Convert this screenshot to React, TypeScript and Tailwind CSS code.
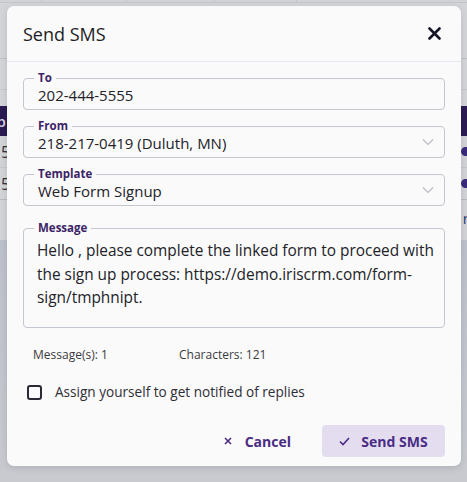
import React from "react";

const font = { fontFamily: '"Open Sans", "Noto Sans", sans-serif' };

function Chevron() {
  return (
    <svg width="12" height="8" viewBox="0 0 12 8" className="shrink-0">
      <path d="M1 1.5 L6 6.5 L11 1.5" fill="none" stroke="#b9bcc4" strokeWidth="1.2" />
    </svg>
  );
}

function Field({ label, children, select }: { label: string; children: React.ReactNode; select?: boolean }) {
  return (
    <div className="relative h-[32px] rounded-[4px] border border-[#c3c7cf] flex items-center pl-[14px] pr-[10px]">
      <span className="absolute -top-[9px] left-[10px] bg-[#fafafa] px-[4px] text-[11.5px] font-bold text-[#3b2466] leading-[16px]">
        {label}
      </span>
      <div className="flex-1 text-[15px] text-[#222228] leading-[20px] pt-[1px]">{children}</div>
      {select && <Chevron />}
    </div>
  );
}

export default function App() {
  return (
    <div className="relative w-[467px] h-[482px] overflow-hidden bg-[#d1d2d6]" style={font}>
      {/* Background page (dimmed) */}
      <div className="flex flex-col w-full text-[#303038]">
        <div className="h-[3px] flex border-b border-[#c4c5c9]">
          <div className="w-[42px] border-r border-[#c4c5c9]" />
          <div className="w-[85px] border-r border-[#c4c5c9]" />
          <div className="w-[88px] border-r border-[#c4c5c9]" />
          <div className="w-[82px] border-r border-[#c4c5c9]" />
        </div>
        <div className="h-[56px] bg-[#d3d4d8] border-b border-[#bfc0c4]" />
        <div className="h-[31px] bg-[#d3d4d8] border-b border-[#c6c7cb]" />
        <div className="h-[16px] bg-[#d3d4d8]" />
        <div className="h-[30px] bg-[#2b1b52] flex items-center justify-between text-[#d9d6e4] text-[15px] font-semibold">
          <span className="-ml-[8px]">Ip</span>
          <span />
        </div>
        <div className="h-[32px] bg-[#d2d3d7] border-b border-[#c6c7cb] flex items-center justify-between text-[16px]">
          <span className="ml-[1px]">5</span>
          <span className="w-[10px] h-[9px] rounded-full border-2 border-[#3b2a7a] bg-[#3b2a7a] mr-[-4px]" />
        </div>
        <div className="h-[32px] bg-[#d2d3d7] border-b border-[#b9babe] flex items-center justify-between text-[16px]">
          <span className="ml-[1px]">5</span>
          <span className="w-[10px] h-[9px] rounded-full border-2 border-[#3b2a7a] bg-[#3b2a7a] mr-[-4px]" />
        </div>
        <div className="h-[40px] bg-[#d2d3d7] flex items-center justify-end text-[15px] text-[#2b3a70]">
          <span className="mr-[-2px] -mt-[4px]">r</span>
        </div>
        <div className="h-[260px] bg-gradient-to-b from-[#bcc0ca] to-[#c9cbd0]" />
      </div>

      {/* Dialog */}
      <div className="absolute left-[7px] top-[6px] w-[454px] h-[460px] bg-[#fafafa] rounded-[7px] shadow-[0_2px_6px_rgba(0,0,0,0.12)] flex flex-col">
        <div className="h-[56px] border-b border-[#e4e6f1] flex items-center justify-between pl-[16px] pr-[20px]">
          <span className="text-[18px] text-[#1d1d24] leading-[24px] mt-[1px]">Send SMS</span>
          <svg width="13" height="13" viewBox="0 0 13 13">
            <path d="M1.5 1.5 L11.5 11.5 M11.5 1.5 L1.5 11.5" stroke="#15152a" strokeWidth="2.6" strokeLinecap="round" />
          </svg>
        </div>

        <div className="flex flex-col px-[16px] pt-[16px]">
          <Field label="To">202-444-5555</Field>
          <div className="h-[16px]" />
          <Field label="From" select>
            218-217-0419 (Duluth, MN)
          </Field>
          <div className="h-[16px]" />
          <Field label="Template" select>
            Web Form Signup
          </Field>
          <div className="h-[22px]" />
          <div className="relative h-[100px] rounded-[4px] border border-[#c3c7cf] pl-[13px] pr-[8px] pt-[10px]">
            <span className="absolute -top-[9px] left-[10px] bg-[#fafafa] px-[4px] text-[11.5px] font-bold text-[#3b2466] leading-[16px]">
              Message
            </span>
            <p className="text-[15.4px] leading-[23.5px] text-[#222228]">
              Hello , please complete the linked form to proceed with the sign up process: https://demo.iriscrm.com/form-sign/tmphnipt.
            </p>
          </div>

          <div className="flex text-[12px] text-[#3a3a42] mt-[19px] pl-[10px] leading-[16px]">
            <span className="w-[146px]">Message(s): 1</span>
            <span>Characters: 121</span>
          </div>

          <div className="flex items-center mt-[19px] pl-[4px]">
            <span className="w-[15px] h-[15px] rounded-[3px] border-2 border-[#2a2a36]" />
            <span className="ml-[13px] text-[13.6px] text-[#2e2e36] leading-[20px]">Assign yourself to get notified of replies</span>
          </div>

          <div className="flex justify-end items-center mt-[23px] gap-[31px]">
            <div className="flex items-center text-[#4a2c84] text-[14px] font-bold">
              <svg width="8" height="8" viewBox="0 0 8 8">
                <path d="M1 1 L7 7 M7 1 L1 7" stroke="#4a2c84" strokeWidth="1.6" />
              </svg>
              <span className="ml-[13px]">Cancel</span>
            </div>
            <div className="h-[32px] w-[123px] rounded-[4px] bg-[#e4ddf0] flex items-center justify-center text-[#4a2c84] text-[14px] font-bold">
              <svg width="11" height="9" viewBox="0 0 11 9">
                <path d="M1 4.5 L4 7.5 L10 1" fill="none" stroke="#4a2c84" strokeWidth="1.6" />
              </svg>
              <span className="ml-[11px]">Send SMS</span>
            </div>
          </div>
        </div>
      </div>
    </div>
  );
}
